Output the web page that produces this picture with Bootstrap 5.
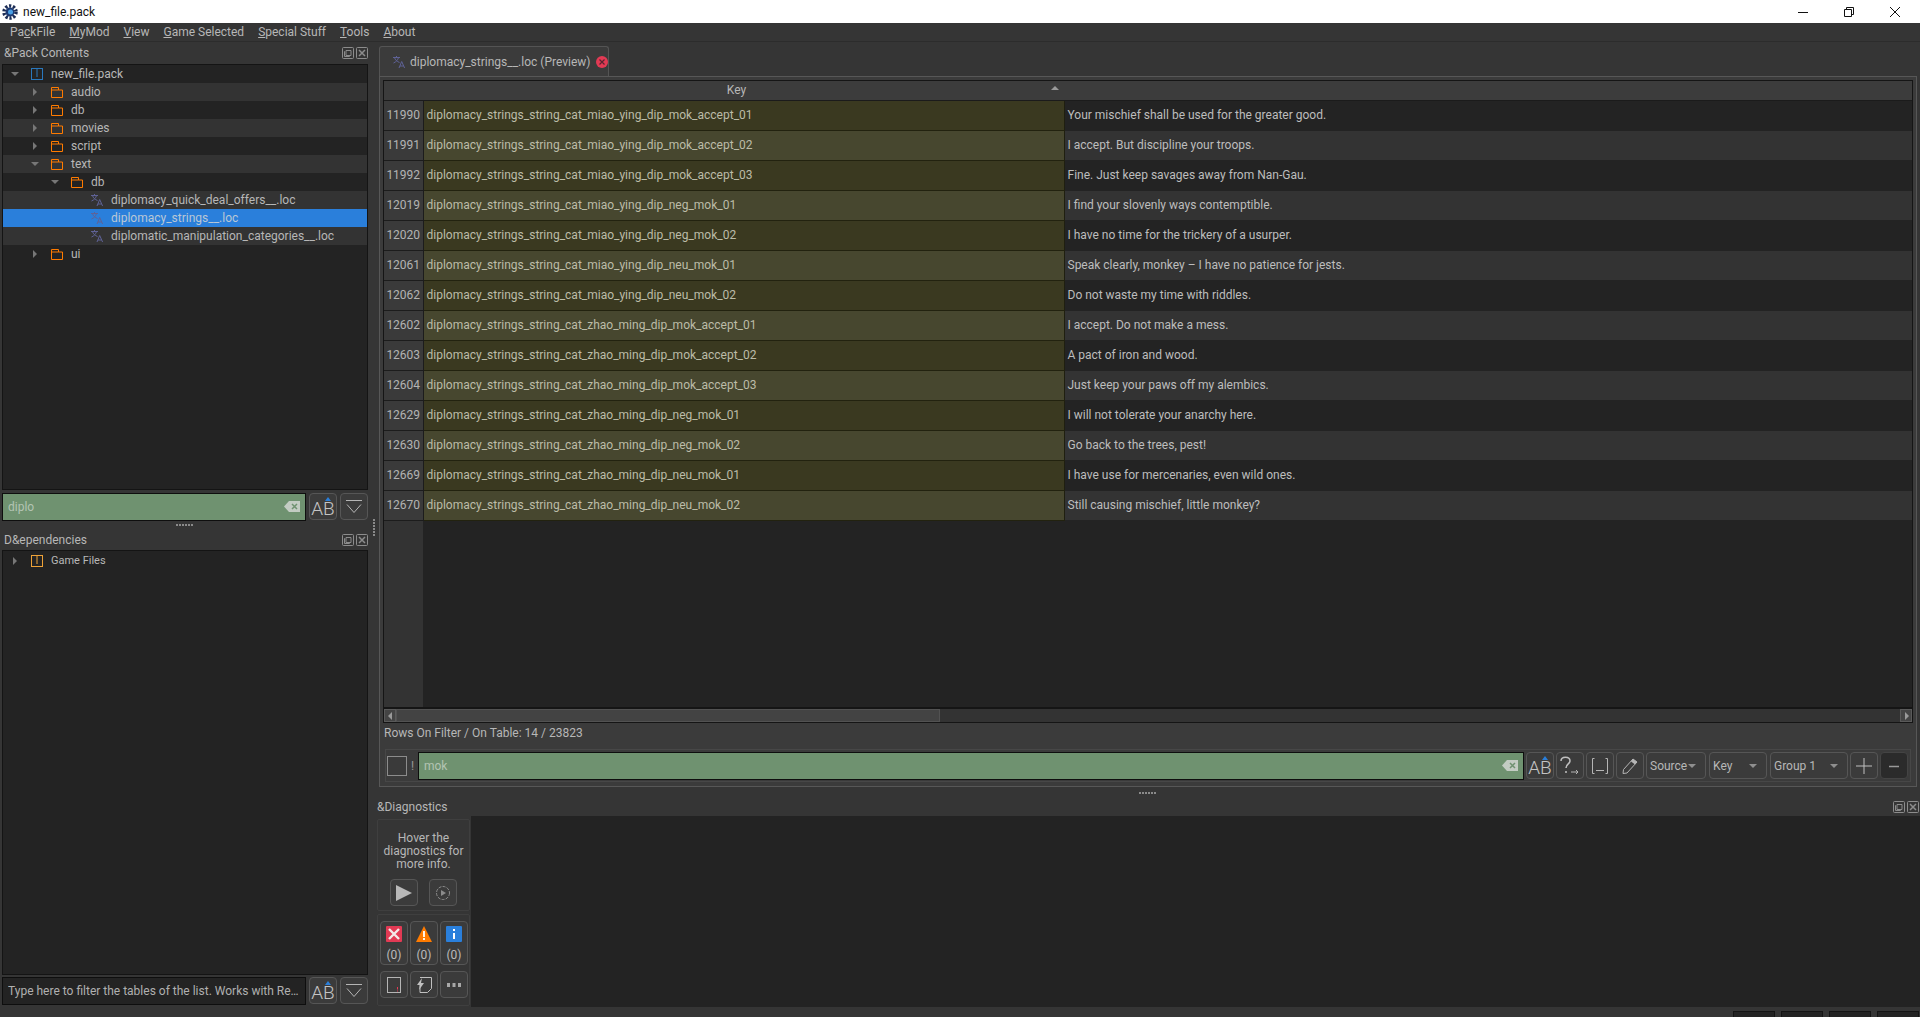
<!DOCTYPE html>
<html lang="en">
<head>
<meta charset="utf-8">
<title>new_file.pack</title>
<link href="https://cdn.jsdelivr.net/npm/bootstrap@5.3.0/dist/css/bootstrap.min.css" rel="stylesheet">
<style>
html,body{height:1017px;overflow:hidden}
body{background:#353535;color:#b7b7b7;font-family:Roboto,"Noto Sans",sans-serif;font-size:12px;line-height:18px}
svg{display:block;flex:none}
.titlebar{height:23px;background:#fff;color:#111;font-size:12px}
.apptitle{margin-left:2px}
.appname{margin-left:5px}
.winbtns{margin-right:20px;gap:36px}
.menubar{height:19px;background:#353535;border-bottom:1px solid #2c2c2c;padding-left:10px;gap:14px;line-height:19px;color:#b7b7b7}
.workarea{height:965px}
.leftcol{width:370px;padding-left:2px;padding-right:2px}
.splitv{width:5px;padding-top:6px;padding-left:3px}
.dotsv{width:2px;height:18px;background:repeating-linear-gradient(#8a8a8a 0 2px,transparent 2px 3px)}
.rightcol{width:1545px}
.docktitle{height:22px;padding-left:2px;padding-right:0;gap:2px}
.docktitle.dt2{height:21px}
.tree{background:#232323;border:1px solid #141414;overflow:hidden}
.tree1{height:426px}
.tree2{height:425px;padding-top:1px}
.trow{height:18px;gap:0}
.trow.alt{background:#333}
.trow.sel{background:#2a7fdb;color:#b9c7d6}
.lv0{padding-left:8px}.lv1{padding-left:28px}.lv2{padding-left:48px}.lv3{padding-left:68px}
.twist{width:12px;height:18px;margin-right:8px}
.tl{width:20px;flex:none}
.ticon{margin-right:8px}
.gf{font-size:11px}
.filter{height:28px;gap:3px}
.f1{margin-top:3px}
.f2{margin-top:2px}
.fltinput.form-control{flex:1;height:28px;border:1px solid #0e0e0e;border-radius:0;background:#6f9270;color:#b3c4b3;font-size:12px;padding:0 5px;box-shadow:none;text-overflow:ellipsis}
.fltinput.dark.form-control{background:#232323;color:#b7b7b7}
.fltinput.dark::placeholder{color:#b0b0b0;opacity:1;text-overflow:ellipsis}
.inputwrap{position:relative;flex:1;display:flex}
.clearic{position:absolute;right:6px;top:8px}
.qbtn.btn{width:28px;height:27px;padding:0;background:#3b3b3b;border:1px solid #565656;border-radius:4px;color:#bbb;display:flex;align-items:center;justify-content:center;position:relative;flex:none}
.qbtn.dim.btn{background:#2b2b2b;border-color:#444}
.qbtn.tall.btn{height:44px;flex-direction:column;justify-content:flex-start;font-size:12px;gap:4px;padding-top:4px}
.qbtn.abbtn.btn{font-size:19px;line-height:20px;padding-top:4px;font-weight:300;color:#c4c4c4}
.abbtn::before{content:"";position:absolute;left:50%;top:3px;margin-left:2px;border:3px solid transparent;border-top:0;border-bottom:4px solid #2a7fdb}
.splith{height:8px}
.splith.sh2{padding-top:4px}
.dotsh{width:18px;height:2px;background:repeating-linear-gradient(90deg,#8a8a8a 0 2px,transparent 2px 3px)}
.tabstrip{height:34px;padding-top:4px;padding-left:4px}
.tabhead{width:230px;height:30px;background:#3b3b3b;border:1px solid #545454;border-bottom:0;border-radius:3px 3px 0 0;padding-left:13px;padding-right:15px;gap:5px;white-space:nowrap}
.tabhead .closer{margin-left:auto}
.pane{height:711px;margin-left:4px;margin-right:3px;background:#3b3b3b;border:1px solid #575757;padding:3px 3px 0 3px}
.tablebox{height:628px;background:linear-gradient(90deg,#333 0 39px,#232323 39px);border:1px solid #151515;overflow:hidden}
.loctable{width:100%;table-layout:fixed;border-collapse:collapse;color:#b9b9b0}
.loctable th{height:19px;background:#3c3c3c;font-weight:400;text-align:center;position:relative;padding:0 14px 0 0;color:#b7b7b7;border-bottom:1px solid #1b1b1b}
.sortup{position:absolute;right:5px;top:5px;border:4px solid transparent;border-top:0;border-bottom:4px solid #999}
.loctable td{height:30px;padding:0 3px;border-bottom:1px solid #232323;white-space:nowrap}
.loctable td.num{background:#3a3a3a;color:#b3b3b3;text-align:center;padding:0;border-right:1px solid #1c1c1c;border-bottom:1px solid #1c1c1c}
.loctable td.key{background:#3a3920;border-right:1px solid #1f1f10;border-bottom:1px solid #22220f;color:#bcbca8}
.loctable tr.even td.key{background:#47472f}
.loctable td.val{background:#232323;color:#bdbdbd}
.loctable tr.even td.val{background:#333}
.loctable .c1{width:39px}.loctable .c2{width:641px}
.hscroll{height:15px;background:#333;border:1px solid #151515;border-top:1px solid #151515;flex:none}
.hsbtn{width:12px;background:#444;border:1px solid #5a5a5a}
.hsthumb{width:544px;background:#434343;border:1px solid #525252}
.hstrack{flex:1}
.rowsinfo{height:26px;padding-left:1px;padding-bottom:6px;flex:none}
.filterbar{height:33px;border:1px solid #474747;margin:0 2px;padding:0 2px 0 0;gap:2px;flex:none}
.chk{width:20px;height:20px;border:1px solid #8c8c8c;margin:0 2px 0 1px;background:#3a3a3a;flex:none}
.bang{width:5px;color:#999;flex:none}
.combo.btn{height:27px;padding:0 6px 0 3px;background:#3b3b3b;border:1px solid #565656;border-radius:4px;color:#b7b7b7;font-size:12px;display:flex;align-items:center;justify-content:space-between;flex:none}
.combo::after{content:"";border:4px solid transparent;border-bottom:0;border-top:4px solid #8f8f8f;margin-right:3px}
.cw1{width:60px}.cw2{width:58px;margin-left:1px}.cw3{width:78px;margin-left:1px}
.diagtitle{height:21px;padding-top:3px;padding-left:2px;padding-right:1px}
.diagbody{height:191px}
.diagside{width:96px;padding-left:2px;padding-right:1px;padding-top:3px;gap:3px}
.diagbox{border:1px solid #3f3f3f;border-radius:2px;background:#353535}
.box1{height:92px;padding-top:12px;line-height:13px;text-align:center}
.box2{height:92px;padding:6px 2px 0 2px}
.diagmain{flex:1;background:#232323}
.pbtns{gap:11px;margin-top:8px}
.gridbtns{gap:2px}
.statusbar{height:10px;padding-top:4px;gap:6px;justify-content:flex-end;padding-right:1px}
.statusbox{width:42px;height:6px;background:#232323;border:1px solid #141414;border-bottom:0}
</style>
</head>
<body>
<svg width="0" height="0" class="position-absolute">
<defs>
<symbol id="i-folder" viewBox="0 0 12 12"><path d="M.5 1.5h7v2.5h4v7.5h-11zM.5 4h7" fill="none" stroke="#ff7b00"/></symbol>
<symbol id="i-pack" viewBox="0 0 12 12"><rect x=".5" y=".5" width="11" height="11" fill="none" stroke="#2a78bd"/><path d="M5 2h2M5 4h2M5 6h2M5 8h2" stroke="#2a78bd"/></symbol>
<symbol id="i-game" viewBox="0 0 12 12"><rect x=".5" y=".5" width="11" height="11" fill="none" stroke="#eea238"/><path d="M5 2h2M5 4h2M5 6h2M5 8h2" stroke="#eea238"/></symbol>
<symbol id="i-loc" viewBox="0 0 12 12"><g fill="none" stroke="#5f6296"><path d="M0 1.5h7M3.5 0v1.5M1.5 1.5c.6 2.4 2.4 4 5 5M5.5 1.5C5 3.8 3 6 .5 7"/><path d="M6 12l2.7-6.5L11.6 12M7 10h3.6"/></g></symbol>
<symbol id="i-float" viewBox="0 0 12 12"><g fill="none" stroke="#8c8c8c"><rect x=".5" y=".5" width="11" height="11" rx="1"/><path d="M4 3.5h5v5H4zM3 4.5H2.500v5h5V9"/></g></symbol>
<symbol id="i-close" viewBox="0 0 12 12"><g fill="none" stroke="#8c8c8c"><rect x=".5" y=".5" width="11" height="11" rx="1"/><path d="M3 3l6 6M9 3l-6 6" stroke-width="1.500"/></g></symbol>
<symbol id="i-clear" viewBox="0 0 16 11"><path d="M5 0h11v11H5L0 5.500z" fill="#c3ccc3"/><path d="M8 3l5 5M13 3l-5 5" stroke="#6f9270" stroke-width="1.500"/></symbol>
<symbol id="i-down" viewBox="0 0 18 18"><path d="M1 2.500h16M2 6.500l7 8 7-8" fill="none" stroke="#b5b5b5"/></symbol>
</defs>
</svg>

<div class="titlebar d-flex align-items-center">
  <svg class="apptitle" width="16" height="16" viewBox="0 0 16 16"><circle cx="8" cy="8" r="6" fill="none" stroke="#1d2d55" stroke-width="3.500" stroke-dasharray="2.200 1.600"/><circle cx="8" cy="8" r="4.500" fill="#1d3a73"/><circle cx="8.500" cy="8" r="2.500" fill="#4aa0e6"/></svg>
  <span class="appname">new_file.pack</span>
  <div class="winbtns d-flex align-items-center ms-auto">
    <svg width="10" height="10" viewBox="0 0 10 10"><path d="M0 5.500h10" stroke="#111"/></svg>
    <svg width="10" height="10" viewBox="0 0 10 10"><path d="M.5 2.500h7v7h-7zM2.500 2.500v-2h7v7h-2" fill="none" stroke="#111"/></svg>
    <svg width="10" height="10" viewBox="0 0 10 10"><path d="M0 0l10 10M10 0L0 10" stroke="#111"/></svg>
  </div>
</div>

<div class="menubar d-flex">
  <span>Pa<u>c</u>kFile</span><span><u>M</u>yMod</span><span><u>V</u>iew</span><span><u>G</u>ame Selected</span><span><u>S</u>pecial Stuff</span><span><u>T</u>ools</span><span><u>A</u>bout</span>
</div>

<div class="workarea d-flex">
  <div class="leftcol d-flex flex-column">
    <div class="docktitle d-flex align-items-center">
      <span class="me-auto">&amp;Pack Contents</span>
      <svg width="12" height="12"><use href="#i-float"/></svg><svg width="12" height="12"><use href="#i-close"/></svg>
    </div>
    <div class="tree tree1">
      <div class="trow d-flex align-items-center lv0"><svg class="twist" viewBox="0 0 12 18"><path d="M0 7h8l-4 4z" fill="#777"/></svg><svg class="ticon" width="12" height="12"><use href="#i-pack"/></svg>new_file.pack</div>
      <div class="trow alt d-flex align-items-center lv1"><svg class="twist" viewBox="0 0 12 18"><path d="M2 5l4 4-4 4z" fill="#777"/></svg><svg class="ticon" width="12" height="12"><use href="#i-folder"/></svg>audio</div>
      <div class="trow d-flex align-items-center lv1"><svg class="twist" viewBox="0 0 12 18"><path d="M2 5l4 4-4 4z" fill="#777"/></svg><svg class="ticon" width="12" height="12"><use href="#i-folder"/></svg>db</div>
      <div class="trow alt d-flex align-items-center lv1"><svg class="twist" viewBox="0 0 12 18"><path d="M2 5l4 4-4 4z" fill="#777"/></svg><svg class="ticon" width="12" height="12"><use href="#i-folder"/></svg>movies</div>
      <div class="trow d-flex align-items-center lv1"><svg class="twist" viewBox="0 0 12 18"><path d="M2 5l4 4-4 4z" fill="#777"/></svg><svg class="ticon" width="12" height="12"><use href="#i-folder"/></svg>script</div>
      <div class="trow alt d-flex align-items-center lv1"><svg class="twist" viewBox="0 0 12 18"><path d="M0 7h8l-4 4z" fill="#777"/></svg><svg class="ticon" width="12" height="12"><use href="#i-folder"/></svg>text</div>
      <div class="trow d-flex align-items-center lv2"><svg class="twist" viewBox="0 0 12 18"><path d="M0 7h8l-4 4z" fill="#777"/></svg><svg class="ticon" width="12" height="12"><use href="#i-folder"/></svg>db</div>
      <div class="trow alt d-flex align-items-center lv3"><span class="tl"></span><svg class="ticon" width="12" height="12"><use href="#i-loc"/></svg>diplomacy_quick_deal_offers__.loc</div>
      <div class="trow sel d-flex align-items-center lv3"><span class="tl"></span><svg class="ticon" width="12" height="12"><use href="#i-loc"/></svg>diplomacy_strings__.loc</div>
      <div class="trow alt d-flex align-items-center lv3"><span class="tl"></span><svg class="ticon" width="12" height="12"><use href="#i-loc"/></svg>diplomatic_manipulation_categories__.loc</div>
      <div class="trow d-flex align-items-center lv1"><svg class="twist" viewBox="0 0 12 18"><path d="M2 5l4 4-4 4z" fill="#777"/></svg><svg class="ticon" width="12" height="12"><use href="#i-folder"/></svg>ui</div>
    </div>
    <div class="filter f1 d-flex">
      <div class="inputwrap"><input class="form-control fltinput" value="diplo"><svg class="clearic" width="16" height="11"><use href="#i-clear"/></svg></div>
      <button class="btn qbtn abbtn">AB</button>
      <button class="btn qbtn"><svg width="18" height="18"><use href="#i-down"/></svg></button>
    </div>
    <div class="splith d-flex align-items-center justify-content-center"><span class="dotsh"></span></div>
    <div class="docktitle dt2 d-flex align-items-center">
      <span class="me-auto">D&amp;ependencies</span>
      <svg width="12" height="12"><use href="#i-float"/></svg><svg width="12" height="12"><use href="#i-close"/></svg>
    </div>
    <div class="tree tree2">
      <div class="trow gf d-flex align-items-center lv0"><svg class="twist" viewBox="0 0 12 18"><path d="M2 5l4 4-4 4z" fill="#777"/></svg><svg class="ticon" width="12" height="12"><use href="#i-game"/></svg>Game Files</div>
    </div>
    <div class="filter f2 d-flex">
      <input class="form-control fltinput dark" placeholder="Type here to filter the tables of the list. Works with Regex...">
      <button class="btn qbtn abbtn">AB</button>
      <button class="btn qbtn"><svg width="18" height="18"><use href="#i-down"/></svg></button>
    </div>
  </div>

  <div class="splitv d-flex align-items-center"><span class="dotsv"></span></div>

  <div class="rightcol d-flex flex-column">
    <div class="tabstrip d-flex">
      <div class="tabhead d-flex align-items-center">
        <svg width="12" height="12"><use href="#i-loc"/></svg>
        <span>diplomacy_strings__.loc (Preview)</span>
        <svg class="closer" width="12" height="12" viewBox="0 0 12 12"><circle cx="6" cy="6" r="6" fill="#e23a54"/><path d="M3.500 3.500l5 5M8.500 3.500l-5 5" stroke="#5a2430" stroke-width="1.200"/></svg>
      </div>
    </div>
    <div class="pane d-flex flex-column">
      <div class="tablebox">
        <table class="loctable">
          <colgroup><col class="c1"><col class="c2"><col></colgroup>
          <thead><tr><th></th><th>Key<span class="sortup"></span></th><th></th></tr></thead>
          <tbody>
            <tr><td class="num">11990</td><td class="key">diplomacy_strings_string_cat_miao_ying_dip_mok_accept_01</td><td class="val">Your mischief shall be used for the greater good.</td></tr>
            <tr class="even"><td class="num">11991</td><td class="key">diplomacy_strings_string_cat_miao_ying_dip_mok_accept_02</td><td class="val">I accept. But discipline your troops.</td></tr>
            <tr><td class="num">11992</td><td class="key">diplomacy_strings_string_cat_miao_ying_dip_mok_accept_03</td><td class="val">Fine. Just keep savages away from Nan-Gau.</td></tr>
            <tr class="even"><td class="num">12019</td><td class="key">diplomacy_strings_string_cat_miao_ying_dip_neg_mok_01</td><td class="val">I find your slovenly ways contemptible.</td></tr>
            <tr><td class="num">12020</td><td class="key">diplomacy_strings_string_cat_miao_ying_dip_neg_mok_02</td><td class="val">I have no time for the trickery of a usurper.</td></tr>
            <tr class="even"><td class="num">12061</td><td class="key">diplomacy_strings_string_cat_miao_ying_dip_neu_mok_01</td><td class="val">Speak clearly, monkey – I have no patience for jests.</td></tr>
            <tr><td class="num">12062</td><td class="key">diplomacy_strings_string_cat_miao_ying_dip_neu_mok_02</td><td class="val">Do not waste my time with riddles.</td></tr>
            <tr class="even"><td class="num">12602</td><td class="key">diplomacy_strings_string_cat_zhao_ming_dip_mok_accept_01</td><td class="val">I accept. Do not make a mess.</td></tr>
            <tr><td class="num">12603</td><td class="key">diplomacy_strings_string_cat_zhao_ming_dip_mok_accept_02</td><td class="val">A pact of iron and wood.</td></tr>
            <tr class="even"><td class="num">12604</td><td class="key">diplomacy_strings_string_cat_zhao_ming_dip_mok_accept_03</td><td class="val">Just keep your paws off my alembics.</td></tr>
            <tr><td class="num">12629</td><td class="key">diplomacy_strings_string_cat_zhao_ming_dip_neg_mok_01</td><td class="val">I will not tolerate your anarchy here.</td></tr>
            <tr class="even"><td class="num">12630</td><td class="key">diplomacy_strings_string_cat_zhao_ming_dip_neg_mok_02</td><td class="val">Go back to the trees, pest!</td></tr>
            <tr><td class="num">12669</td><td class="key">diplomacy_strings_string_cat_zhao_ming_dip_neu_mok_01</td><td class="val">I have use for mercenaries, even wild ones.</td></tr>
            <tr class="even"><td class="num">12670</td><td class="key">diplomacy_strings_string_cat_zhao_ming_dip_neu_mok_02</td><td class="val">Still causing mischief, little monkey?</td></tr>
          </tbody>
        </table>
      </div>
      <div class="hscroll d-flex">
        <div class="hsbtn d-flex align-items-center justify-content-center"><svg width="5" height="8" viewBox="0 0 5 8"><path d="M4 0v8L0 4z" fill="#999"/></svg></div>
        <div class="hsthumb"></div>
        <div class="hstrack"></div>
        <div class="hsbtn d-flex align-items-center justify-content-center"><svg width="5" height="8" viewBox="0 0 5 8"><path d="M1 0v8l4-4z" fill="#999"/></svg></div>
      </div>
      <div class="rowsinfo d-flex align-items-center">Rows On Filter / On Table: 14 / 23823</div>
      <div class="filterbar d-flex align-items-center">
        <span class="chk"></span><span class="bang">!</span>
        <div class="inputwrap"><input class="form-control fltinput" value="mok"><svg class="clearic" width="16" height="11"><use href="#i-clear"/></svg></div>
        <button class="btn qbtn abbtn">AB</button>
        <button class="btn qbtn"><svg width="22" height="20" viewBox="0 0 22 20"><path d="M2 5c0-5 9-5 9 0 0 3-4 3-4 7M7 15v2" fill="none" stroke="#c0c0c0" stroke-width="1.500"/><path d="M12 16h7M17 14l2 2-2 2" fill="none" stroke="#b5b5b5"/></svg></button>
        <button class="btn qbtn"><svg width="18" height="18" viewBox="0 0 18 18"><path d="M3.500 1.500h-2v15h2M14.500 1.500h2v15h-2M5 13.500h8" fill="none" stroke="#b5b5b5"/></svg></button>
        <button class="btn qbtn"><svg width="16" height="16" viewBox="0 0 16 16"><path d="M11 1l4 3L5 15l-4 .5.500-4z" fill="none" stroke="#b5b5b5"/><path d="M11 1l4 3-2 2.500-4-3z" fill="#b5b5b5"/></svg></button>
        <button class="btn combo cw1">Source</button>
        <button class="btn combo cw2">Key</button>
        <button class="btn combo cw3">Group 1</button>
        <button class="btn qbtn"><svg width="16" height="16" viewBox="0 0 16 16"><path d="M8 0v16M0 8h16" stroke="#c0c0c0"/></svg></button>
        <button class="btn qbtn dim"><svg width="12" height="12" viewBox="0 0 12 12"><path d="M1 6.500h10" stroke="#999" stroke-width="1.500"/></svg></button>
      </div>
    </div>
    <div class="splith sh2 d-flex align-items-center justify-content-center"><span class="dotsh"></span></div>
    <div class="diagtitle docktitle d-flex align-items-center">
      <span class="me-auto">&amp;Diagnostics</span>
      <svg width="12" height="12"><use href="#i-float"/></svg><svg width="12" height="12"><use href="#i-close"/></svg>
    </div>
    <div class="diagbody d-flex">
      <div class="diagside d-flex flex-column">
        <div class="diagbox box1">Hover the<br>diagnostics for<br>more info.
          <div class="pbtns d-flex justify-content-center">
            <button class="btn qbtn"><svg width="16" height="16" viewBox="0 0 16 16"><path d="M0 0l16 8-16 8z" fill="#b8b8b8"/></svg></button>
            <button class="btn qbtn"><svg width="16" height="16" viewBox="0 0 16 16"><circle cx="8" cy="8" r="6.500" fill="none" stroke="#8c8c8c" stroke-dasharray="3 1.200"/><path d="M6 5l5 3-5 3z" fill="#8c8c8c"/></svg></button>
          </div>
        </div>
        <div class="diagbox box2 d-flex flex-column gridbtns">
          <div class="d-flex gridbtns">
            <button class="btn qbtn tall"><svg width="16" height="16" viewBox="0 0 16 16"><rect width="16" height="16" rx="1" fill="#e23a54"/><path d="M3 3l10 10M13 3L3 13" stroke="#f3e8e8" stroke-width="2.400"/></svg>(0)</button>
            <button class="btn qbtn tall"><svg width="16" height="16" viewBox="0 0 16 16"><path d="M8 0l8 16H0z" fill="#ff7b00"/><path d="M8 5v6M8 12v2" stroke="#fff" stroke-width="1.800"/></svg>(0)</button>
            <button class="btn qbtn tall"><svg width="16" height="16" viewBox="0 0 16 16"><rect width="16" height="16" rx="1" fill="#2a7fdb"/><path d="M8 3v2M8 7v6" stroke="#fff" stroke-width="2"/></svg>(0)</button>
          </div>
          <div class="d-flex gridbtns mt-1">
            <button class="btn qbtn"><svg width="14" height="16" viewBox="0 0 14 16"><rect x=".5" y=".5" width="13" height="15" fill="none" stroke="#b5b5b5"/><path d="M10.500 10v2.500M10.500 13.500v1" stroke="#e23a54"/></svg></button>
            <button class="btn qbtn"><svg width="16" height="16" viewBox="0 0 16 16"><path d="M4 .5h11.500v11l-4 4H4M4 8v7.500" fill="none" stroke="#c0c0c0"/><path d="M6 1L1 8h3l-1 5 5-7H5z" fill="#c0c0c0"/></svg></button>
            <button class="btn qbtn"><svg width="14" height="4" viewBox="0 0 14 4"><path d="M0 0h3v4H0zM5.500 0h3v4h-3zM11 0h3v4h-3z" fill="#a8a8a8"/></svg></button>
          </div>
        </div>
      </div>
      <div class="diagmain"></div>
    </div>
  </div>
</div>
<div class="statusbar d-flex">
  <span class="statusbox"></span><span class="statusbox"></span><span class="statusbox"></span><span class="statusbox"></span>
</div>
<script src="https://cdn.jsdelivr.net/npm/bootstrap@5.3.0/dist/js/bootstrap.bundle.min.js"></script>
</body>
</html>
